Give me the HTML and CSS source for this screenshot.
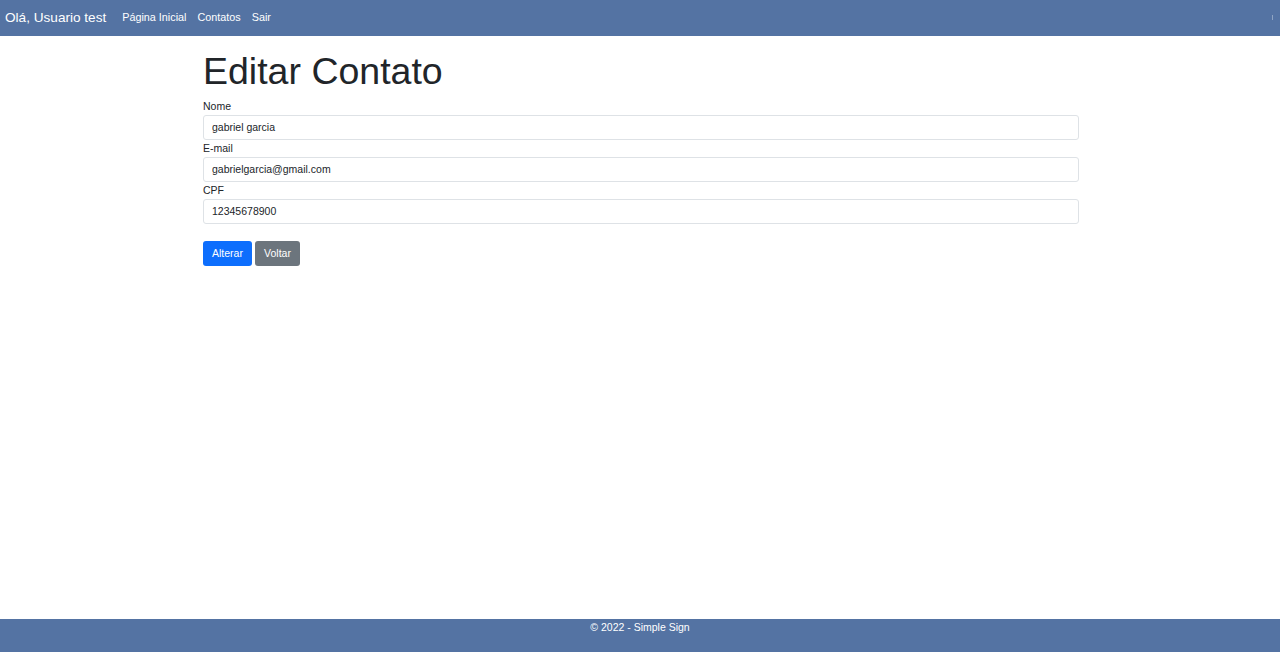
FILE: index.html
```html
<!DOCTYPE html>
<html lang="pt-BR">
<head>
<meta charset="utf-8">
<title>Editar Contato</title>
<link rel="stylesheet" href="styles.css">
</head>
<body>
<div class="page">
  <header class="navbar">
    <span class="brand">Olá, Usuario test</span>
    <nav class="nav">
      <a href="#">Página Inicial</a>
      <a href="#">Contatos</a>
      <a href="#">Sair</a>
    </nav>
    <span class="dots"></span>
  </header>
  <main class="container">
    <h1>Editar Contato</h1>
    <form class="form">
      <label class="label">Nome</label>
      <input class="input" type="text" value="gabriel garcia">
      <label class="label">E-mail</label>
      <input class="input" type="text" value="gabrielgarcia@gmail.com">
      <label class="label">CPF</label>
      <input class="input" type="text" value="12345678900">
      <div class="actions">
        <button type="button" class="btn btn-primary">Alterar</button>
        <button type="button" class="btn btn-secondary">Voltar</button>
      </div>
    </form>
  </main>
  <footer class="footer">© 2022 - Simple Sign</footer>
</div>
</body>
</html>
```

FILE: styles.css
```css
* { box-sizing: border-box; }
html, body { margin: 0; padding: 0; height: 100%; }
body {
  font-family: "Liberation Sans", Arial, sans-serif;
  color: #212529;
  background: #fff;
}
.page {
  display: flex;
  flex-direction: column;
  height: 652px;
}
.navbar {
  height: 36px;
  background: #5473a3;
  display: flex;
  align-items: center;
  padding: 0 0 2px 5px;
  position: relative;
}
.brand {
  color: #fff;
  font-size: 13.6px;
  margin-right: 16px;
}
.nav {
  display: flex;
  gap: 11px;
}
.nav a {
  color: #fff;
  text-decoration: none;
  font-size: 10.8px;
}
.dots {
  position: absolute;
  right: 7px;
  top: 15px;
  width: 1px;
  height: 5px;
  background: rgba(255,255,255,0.35);
}
.container {
  flex: 1;
  width: 876px;
  margin: 0 auto;
  padding-left: 1px;
  padding-top: 17px;
}
h1 {
  font-size: 37.5px;
  font-weight: 400;
  margin: 0 0 9px 0;
  line-height: 1;
}
.form {
  display: flex;
  flex-direction: column;
}
.label {
  font-size: 10.5px;
  line-height: 12px;
  margin-bottom: 3px;
  color: #212529;
}
.input {
  width: 876px;
  height: 25px;
  border: 1px solid #dee2e6;
  border-radius: 3px;
  padding: 0 8px;
  font-family: "Liberation Sans", Arial, sans-serif;
  font-size: 10.5px;
  color: #212529;
  margin-bottom: 2px;
  outline: none;
}
.actions {
  display: flex;
  gap: 3px;
  margin-top: 15px;
}
.btn {
  height: 25px;
  border: none;
  border-radius: 3px;
  color: #fff;
  font-family: "Liberation Sans", Arial, sans-serif;
  font-size: 10.5px;
  padding: 0 8px;
}
.btn-primary { background: #0d6efd; width: 49px; }
.btn-secondary { background: #6c757d; width: 45px; }
.footer {
  height: 33px;
  background: #5473a3;
  color: #fff;
  font-size: 10.5px;
  text-align: center;
  padding-top: 2px;
}
```
